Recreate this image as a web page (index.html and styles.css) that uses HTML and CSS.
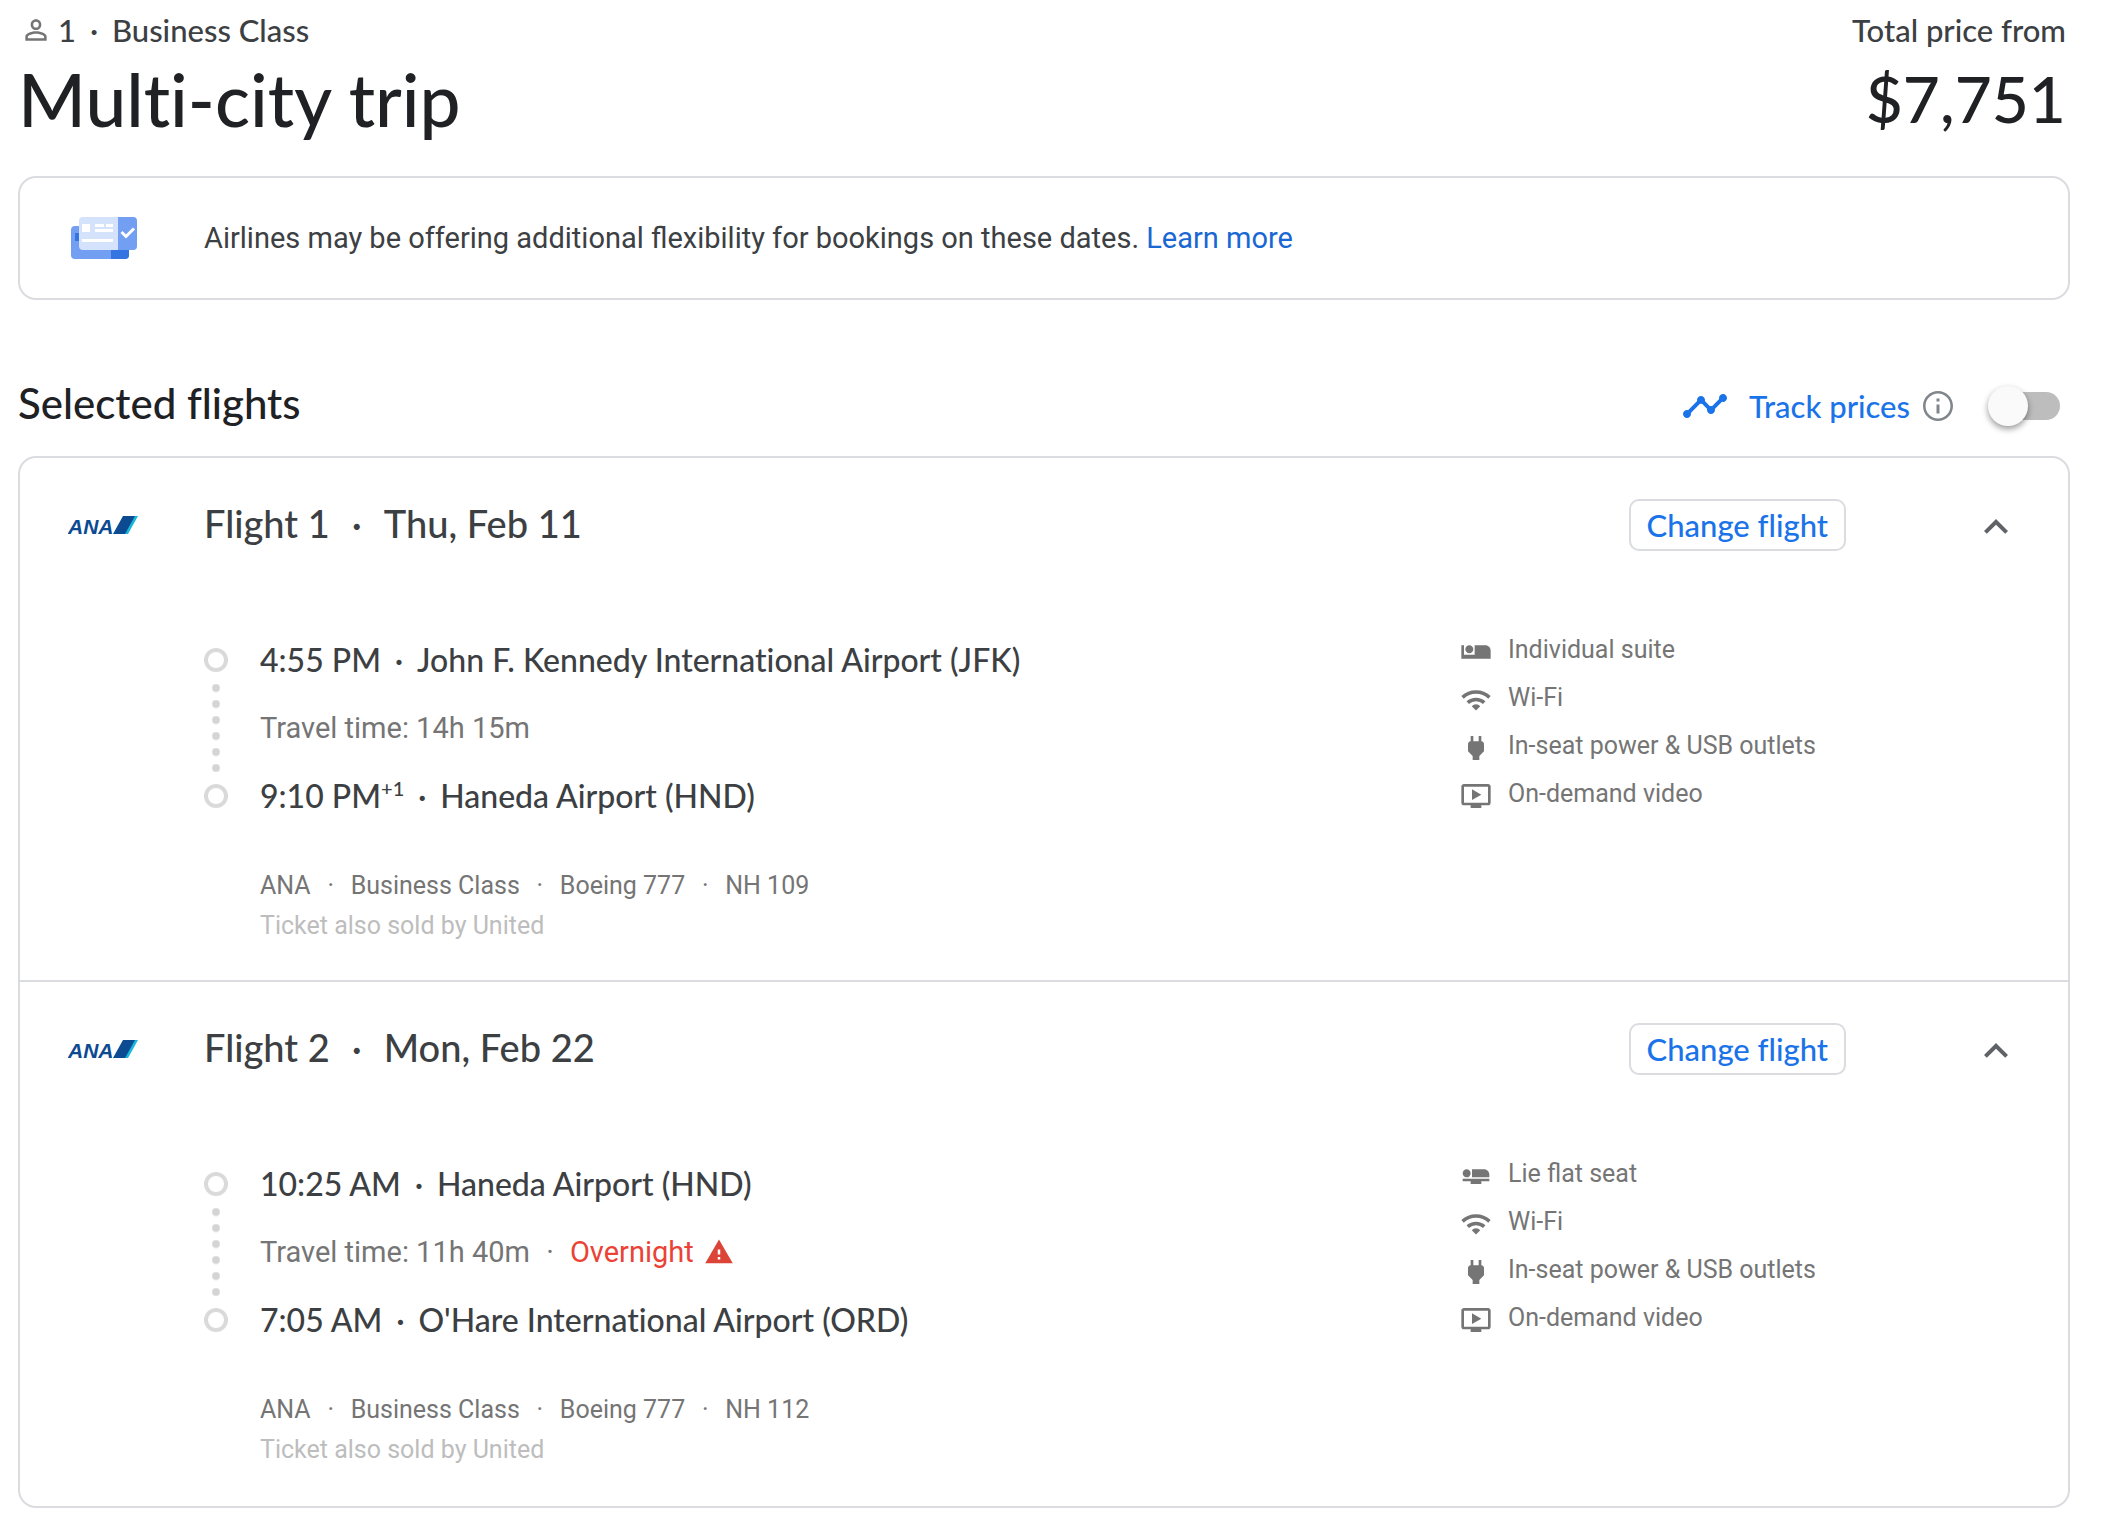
FILE: index.html
```html
<!DOCTYPE html>
<html lang="en">
<head>
  <meta charset="UTF-8">
  <meta name="viewport" content="width=device-width, initial-scale=1.0">
  <title>Multi-city trip</title>
  <link rel="stylesheet" href="styles.css">
</head>
<body>
  <!-- Shared icons -->
  <svg class="icon-defs" aria-hidden="true">
    <symbol id="icon-suite" viewBox="0 0 24 24"><path d="M7 13c1.65 0 3-1.35 3-3S8.65 7 7 7s-3 1.35-3 3 1.35 3 3 3zm12-6h-8v7H3V7H1v10h22v-6c0-2.21-1.79-4-4-4z"/></symbol>
    <symbol id="icon-flat" viewBox="0 0 24 24"><path d="M22 11v2H9V7h9c2.21 0 4 1.79 4 4zM2 14v2h6v2h8v-2h6v-2H2zm5.14-1.9c1.16-1.19 1.14-3.08-.04-4.24-1.19-1.16-3.08-1.14-4.24.04-1.16 1.19-1.14 3.08.04 4.24 1.19 1.16 3.08 1.14 4.24-.04z"/></symbol>
    <symbol id="icon-wifi" viewBox="0 0 24 24"><path d="M1.900 10a14.800 14.800 0 0 1 20.200 0M5.800 14a9.200 9.200 0 0 1 12.400 0" fill="none" stroke="currentColor" stroke-width="2.700"/><path d="M12 19.800l-3.200-3.200a4.500 4.500 0 0 1 6.400 0z"/></symbol>
    <symbol id="icon-power" viewBox="0 0 24 24"><path d="M16.01 7L16 3h-2v4h-4V3H8v4h-.01C7 6.99 6 7.99 6 8.99v5.49L9.5 18v3h5v-3l3.5-3.51v-5.5c0-1-1-2-1.99-1.99z"/></symbol>
    <symbol id="icon-video" viewBox="0 0 24 24"><path d="M21 3H3c-1.11 0-2 .89-2 2v12c0 1.1.89 2 2 2h5v2h8v-2h5c1.1 0 1.99-.9 1.99-2L23 5c0-1.11-.9-2-2-2zm0 14H3V5h18v12zm-5-6l-7 4V7z"/></symbol>
    <symbol id="icon-up" viewBox="0 0 24 24"><path d="M12 8l-6 6 1.41 1.41L12 10.83l4.59 4.58L18 14z"/></symbol>
    <symbol id="logo-ana" viewBox="0 0 70 20">
      <text class="logo-text" x="0" y="19">ANA</text>
      <path d="M55 1h13L58 19H45z" fill="#0c4a91"/>
      <path d="M67 1h3L60 19h-3z" fill="#17b8dc"/>
    </symbol>
  </svg>

  <main class="page">
    <header class="trip-header">
      <div>
        <p class="trip-meta">
          <svg class="icon person" viewBox="0 0 24 24" aria-hidden="true"><path d="M12 5.9a2.1 2.1 0 1 1 0 4.2 2.1 2.1 0 0 1 0-4.2m0 9c2.97 0 6.1 1.46 6.1 2.1v1.1H5.9V17c0-.64 3.13-2.1 6.1-2.1M12 4C9.79 4 8 5.79 8 8s1.79 4 4 4 4-1.79 4-4-1.79-4-4-4zm0 9c-2.67 0-8 1.34-8 4v3h16v-3c0-2.66-5.33-4-8-4z"/></svg>
          <span>1</span><span class="sep">·</span><span>Business Class</span>
        </p>
        <h1>Multi-city trip</h1>
      </div>
      <div class="total">
        <p class="total-label">Total price from</p>
        <p class="total-price">$7,751</p>
      </div>
    </header>

    <section class="notice">
      <svg class="ticket" viewBox="0 0 66 42" aria-hidden="true">
        <rect x="0" y="9" width="58" height="33" rx="4" fill="#739ff2"/>
        <path d="M40 30h18v8a4 4 0 0 1-4 4H40z" fill="#3575e2"/>
        <path d="M4 16h6v8H4z" fill="#3575e2"/>
        <rect x="8" y="0" width="58" height="33" rx="4" fill="#d4e2fc"/>
        <path d="M47 0h15a4 4 0 0 1 4 4v25a4 4 0 0 1-4 4H47z" fill="#739ff2"/>
        <path d="M11 7h8v8h-8zM24 7h9v3h-9zM35 7h7v3h-7zM24 12h18v3H24zM11 22h31v3H11z" fill="#fff"/>
        <path d="M50.500 15l4.500 4.500 8-8" fill="none" stroke="#fff" stroke-width="3"/>
      </svg>
      <p>Airlines may be offering additional flexibility for bookings on these dates. <a href="#">Learn more</a></p>
    </section>

    <div class="list-header">
      <h2>Selected flights</h2>
      <div class="track">
        <svg class="icon track-icon" viewBox="0 0 24 24" aria-hidden="true"><path d="M23 8c0 1.1-.9 2-2 2-.18 0-.35-.02-.51-.07l-3.56 3.55c.05.16.07.34.07.52 0 1.1-.9 2-2 2s-2-.9-2-2c0-.18.02-.36.07-.52l-2.55-2.55c-.16.05-.34.07-.52.07s-.36-.02-.52-.07l-4.55 4.56c.05.16.07.33.07.51 0 1.1-.9 2-2 2s-2-.9-2-2 .9-2 2-2c.18 0 .35.02.51.07l4.56-4.55C8.02 9.36 8 9.18 8 9c0-1.1.9-2 2-2s2 .9 2 2c0 .18-.02.36-.07.52l2.55 2.55c.16-.05.34-.07.52-.07s.36.02.52.07l3.55-3.56C19.02 8.35 19 8.18 19 8c0-1.1.9-2 2-2s2 .9 2 2z"/></svg>
        <label for="track-prices">Track prices</label>
        <button type="button" class="icon-button info" aria-label="About price tracking">
          <svg class="icon" viewBox="0 0 24 24" aria-hidden="true"><path d="M11 7h2v2h-2zm0 4h2v6h-2zm1-9C6.480 2 2 6.480 2 12s4.480 10 10 10 10-4.480 10-10S17.520 2 12 2zm0 18.300c-4.580 0-8.300-3.720-8.300-8.300S7.420 3.700 12 3.700s8.300 3.720 8.300 8.300-3.720 8.300-8.300 8.300z"/></svg>
        </button>
        <input type="checkbox" role="switch" id="track-prices" class="switch">
      </div>
    </div>

    <div class="flights">
      <section class="flight">
        <header class="flight-header">
          <svg class="logo" role="img" aria-label="ANA"><use href="#logo-ana"/></svg>
          <h3><span>Flight 1</span><span class="sep">·</span><span>Thu, Feb 11</span></h3>
          <button type="button" class="change">Change flight</button>
          <button type="button" class="icon-button collapse" aria-label="Collapse flight 1"><svg class="icon"><use href="#icon-up"/></svg></button>
        </header>
        <div class="flight-body">
          <div class="timeline" aria-hidden="true">
            <span class="stop"></span>
            <span class="dots"></span>
            <span class="stop"></span>
          </div>
          <div class="itinerary">
            <p class="leg"><span>4:55 PM</span><span class="sep">·</span><span>John F. Kennedy International Airport (JFK)</span></p>
            <p class="duration"><span>Travel time: 14h 15m</span></p>
            <p class="leg"><span>9:10 PM<sup>+1</sup></span><span class="sep">·</span><span>Haneda Airport (HND)</span></p>
            <p class="details"><span>ANA</span><span class="sep">·</span><span>Business Class</span><span class="sep">·</span><span>Boeing 777</span><span class="sep">·</span><span>NH 109</span></p>
            <p class="sold-by">Ticket also sold by United</p>
          </div>
          <ul class="amenities">
            <li><svg class="icon"><use href="#icon-suite"/></svg>Individual suite</li>
            <li><svg class="icon"><use href="#icon-wifi"/></svg>Wi-Fi</li>
            <li><svg class="icon"><use href="#icon-power"/></svg>In-seat power &amp; USB outlets</li>
            <li><svg class="icon"><use href="#icon-video"/></svg>On-demand video</li>
          </ul>
        </div>
      </section>

      <section class="flight">
        <header class="flight-header">
          <svg class="logo" role="img" aria-label="ANA"><use href="#logo-ana"/></svg>
          <h3><span>Flight 2</span><span class="sep">·</span><span>Mon, Feb 22</span></h3>
          <button type="button" class="change">Change flight</button>
          <button type="button" class="icon-button collapse" aria-label="Collapse flight 2"><svg class="icon"><use href="#icon-up"/></svg></button>
        </header>
        <div class="flight-body">
          <div class="timeline" aria-hidden="true">
            <span class="stop"></span>
            <span class="dots"></span>
            <span class="stop"></span>
          </div>
          <div class="itinerary">
            <p class="leg"><span>10:25 AM</span><span class="sep">·</span><span>Haneda Airport (HND)</span></p>
            <p class="duration">
              <span>Travel time: 11h 40m</span><span class="sep">·</span><span class="overnight">Overnight</span>
              <svg class="icon warning" viewBox="0 0 24 24" aria-hidden="true"><path d="M1 21h22L12 2 1 21zm12-3h-2v-2h2v2zm0-4h-2v-4h2v4z"/></svg>
            </p>
            <p class="leg"><span>7:05 AM</span><span class="sep">·</span><span>O'Hare International Airport (ORD)</span></p>
            <p class="details"><span>ANA</span><span class="sep">·</span><span>Business Class</span><span class="sep">·</span><span>Boeing 777</span><span class="sep">·</span><span>NH 112</span></p>
            <p class="sold-by">Ticket also sold by United</p>
          </div>
          <ul class="amenities">
            <li><svg class="icon"><use href="#icon-flat"/></svg>Lie flat seat</li>
            <li><svg class="icon"><use href="#icon-wifi"/></svg>Wi-Fi</li>
            <li><svg class="icon"><use href="#icon-power"/></svg>In-seat power &amp; USB outlets</li>
            <li><svg class="icon"><use href="#icon-video"/></svg>On-demand video</li>
          </ul>
        </div>
      </section>
    </div>
  </main>
</body>
</html>
```

FILE: styles.css
```css
* {
  margin: 0;
  padding: 0;
  box-sizing: border-box;
}

body {
  background: #fff;
  color: #3c4043;
  font-family: Roboto, sans-serif;
  font-size: 29px;
}

h1,
h2,
h3,
.trip-meta,
.total,
.leg,
.track,
.change {
  font-family: Lato, sans-serif;
  font-weight: 500;
  font-variant-ligatures: no-common-ligatures;
}

a {
  color: #1967d2;
  text-decoration: none;
}

button {
  background: none;
  border: none;
  cursor: pointer;
}

.icon-defs {
  display: none;
}

.icon {
  display: block;
  flex: none;
  width: 32px;
  height: 32px;
  fill: currentColor;
}

.sep {
  flex: none;
  width: 40px;
  text-align: center;
}

.page {
  padding: 12px 34px 16px 18px;
}

/* Trip header */
.trip-header {
  display: flex;
  justify-content: space-between;
  padding: 0 4px 0 0;
  margin-bottom: 26px;
}

.trip-meta {
  display: flex;
  align-items: center;
  font-size: 31px;
  line-height: 36px;
}

.person {
  margin: 0 6px 0 2px;
  color: #757575;
}

.trip-meta .sep {
  width: 36px;
}

h1 {
  color: #202124;
  font-size: 73px;
  line-height: 102px;
}

.total {
  text-align: right;
}

.total-label {
  font-size: 31px;
  line-height: 36px;
}

.total-price {
  color: #202124;
  font-size: 64px;
  line-height: 102px;
}

/* Flexibility notice */
.notice {
  display: flex;
  align-items: center;
  min-height: 124px;
  padding: 0 51px;
  border: 2px solid #dadce0;
  border-radius: 18px;
}

.ticket {
  flex: none;
  width: 66px;
  height: 42px;
  margin-right: 67px;
}

/* Selected flights */
.list-header {
  display: flex;
  align-items: center;
  justify-content: space-between;
  margin-top: 82px;
  margin-bottom: 26px;
}

h2 {
  padding-bottom: 6px;
  color: #202124;
  font-size: 42px;
  line-height: 42px;
}

.track {
  display: flex;
  align-items: center;
  padding-right: 10px;
  color: #1a73e8;
  font-size: 31px;
}

.track-icon {
  width: 48px;
  height: 48px;
  margin-right: 20px;
}

.icon-button {
  color: #5f6368;
}

.info {
  margin: 0 36px 0 10px;
  color: #80868b;
}

.info .icon {
  width: 36px;
  height: 36px;
}

.switch {
  position: relative;
  appearance: none;
  width: 68px;
  height: 28px;
  border-radius: 14px;
  background: #bdbdbd;
  cursor: pointer;
}

.switch::before {
  content: "";
  position: absolute;
  top: -6px;
  left: -4px;
  width: 40px;
  height: 40px;
  border-radius: 50%;
  background: #fafafa;
  box-shadow: 0 3px 6px rgba(0, 0, 0, 0.4);
}

.switch:checked {
  background: #8ab4f8;
}

.switch:checked::before {
  left: 32px;
  background: #1a73e8;
}

.flights {
  padding-bottom: 2px;
  border: 2px solid #dadce0;
  border-radius: 18px;
}

.flight {
  padding: 41px 0 34px;
}

.flight + .flight {
  border-top: 2px solid #dadce0;
}

.flight-header {
  display: flex;
  align-items: center;
  padding: 0 48px;
}

.logo {
  flex: none;
  width: 70px;
  height: 20px;
  margin-right: 66px;
}

.logo-text {
  fill: #0c4a91;
  font: italic bold 21px "Liberation Sans", sans-serif;
}

h3 {
  display: flex;
  flex: 1;
  padding-bottom: 4px;
  font-size: 38px;
  line-height: 46px;
}

h3 .sep {
  width: 54px;
}

.change {
  height: 52px;
  padding: 0 16px;
  border: 2px solid #dadce0;
  border-radius: 10px;
  color: #1a73e8;
  font-size: 31px;
}

.collapse {
  padding-top: 4px;
  margin-left: 126px;
}

.collapse .icon {
  width: 48px;
  height: 48px;
}

.flight-body {
  display: grid;
  grid-template-columns: 24px 1fr 608px;
  column-gap: 32px;
  padding-left: 184px;
  margin-top: 85px;
}

.timeline {
  display: flex;
  flex-direction: column;
  padding-top: 12px;
}

.stop {
  height: 24px;
  border: 4px solid #dadada;
  border-radius: 50%;
}

.dots {
  height: 88px;
  margin: 12px 8px;
  background: radial-gradient(circle at 4px 4px, #d4d4d4 3px, transparent 5px) 0 0 / 8px 16px repeat-y;
}

.itinerary {
  padding-top: 4px;
}

.leg,
.duration,
.details {
  display: flex;
  align-items: center;
  line-height: 40px;
}

.leg {
  font-size: 32px;
}

.leg .sep {
  width: 36px;
}

.leg sup {
  font-size: 20px;
  line-height: 1;
}

.duration {
  margin: 28px 0;
  color: #757575;
}

.overnight {
  color: #ea4335;
}

.warning {
  width: 30px;
  height: 30px;
  margin-left: 10px;
  color: #db4437;
}

.details {
  margin-top: 50px;
  color: #757575;
  font-size: 25px;
}

.sold-by {
  color: #bdbdbd;
  font-size: 25px;
  line-height: 40px;
}

.amenities {
  list-style: none;
  color: #757575;
  font-size: 25px;
  line-height: 28px;
}

.amenities li {
  display: flex;
  gap: 16px;
  height: 48px;
}
```
